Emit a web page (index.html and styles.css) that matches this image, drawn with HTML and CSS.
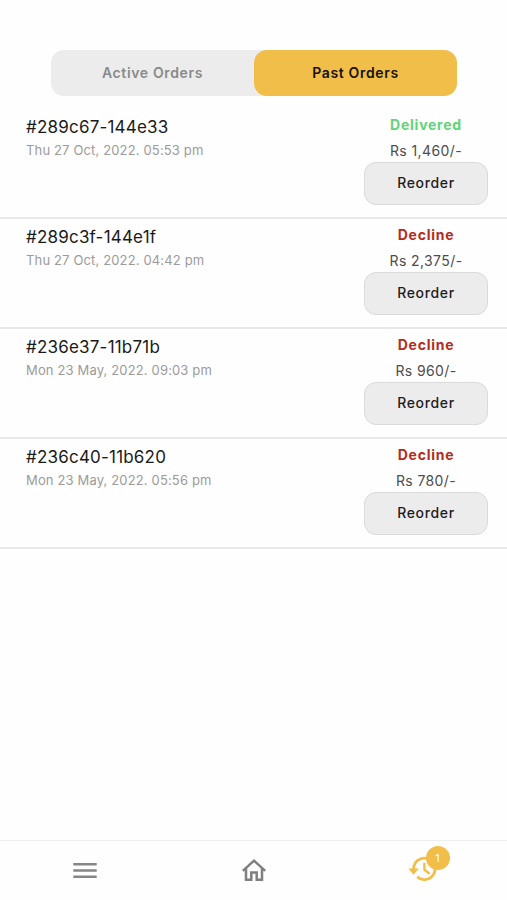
FILE: index.html
```html
<!DOCTYPE html>
<html lang="en">

<head>
    <meta charset="UTF-8">
    <meta name="viewport" content="width=device-width, initial-scale=1.0">
    <title>Past Orders</title>
    <link rel="stylesheet" href="styles.css">
</head>

<body>
    <div class="tabs">
        <button class="tab">Active Orders</button>
        <button class="tab active">Past Orders</button>
    </div>
    <main class="orders">
        <div class="order">
            <div class="order-info">
                <h3>#289c67-144e33</h3>
                <p>Thu 27 Oct, 2022. 05:53 pm</p>
            </div>
            <div class="order-side">
                <span class="status delivered">Delivered</span>
                <span class="price">Rs 1,460/-</span>
                <button class="reorder">Reorder</button>
            </div>
        </div>
        <div class="order">
            <div class="order-info">
                <h3>#289c3f-144e1f</h3>
                <p>Thu 27 Oct, 2022. 04:42 pm</p>
            </div>
            <div class="order-side">
                <span class="status decline">Decline</span>
                <span class="price">Rs 2,375/-</span>
                <button class="reorder">Reorder</button>
            </div>
        </div>
        <div class="order">
            <div class="order-info">
                <h3>#236e37-11b71b</h3>
                <p>Mon 23 May, 2022. 09:03 pm</p>
            </div>
            <div class="order-side">
                <span class="status decline">Decline</span>
                <span class="price">Rs 960/-</span>
                <button class="reorder">Reorder</button>
            </div>
        </div>
        <div class="order">
            <div class="order-info">
                <h3>#236c40-11b620</h3>
                <p>Mon 23 May, 2022. 05:56 pm</p>
            </div>
            <div class="order-side">
                <span class="status decline">Decline</span>
                <span class="price">Rs 780/-</span>
                <button class="reorder">Reorder</button>
            </div>
        </div>
    </main>
    <nav class="bottom-nav">
        <a href="#" class="nav-item" aria-label="Menu">
            <svg width="30" height="30" viewBox="0 0 30 30">
                <path d="M3.3 8.3h23.4M3.3 14.5h23.4M3.3 20.7h23.4" fill="none" stroke="#868686" stroke-width="2.4"/>
            </svg>
        </a>
        <a href="#" class="nav-item" aria-label="Home">
            <svg width="30" height="30" viewBox="0 0 30 30">
                <path d="M3.8 14.9L15 4.6l11.2 10.3M7 12.4v11.3h5.3v-7.3h5.4v7.3H23V12.4" fill="none" stroke="#808080" stroke-width="2.5"/>
            </svg>
        </a>
        <a href="#" class="nav-item" aria-label="Orders">
            <span class="history">
                <svg width="30" height="30" viewBox="0 0 30 30">
                    <path d="M5.6 12.9A10.7 10.7 0 1 1 9.2 20.9" fill="none" stroke="#f1be4a" stroke-width="2.8"/>
                    <path d="M0.4 12.4h10.4L5.6 18.8z" fill="#f1be4a"/>
                    <path d="M16.4 6.8v6.8l5.2 4.2" fill="none" stroke="#f1be4a" stroke-width="2.4"/>
                </svg>
                <span class="badge">1</span>
            </span>
        </a>
    </nav>
</body>

</html>
```

FILE: styles.css
```css
* {
    box-sizing: border-box;
}

body {
    font-family: Inter, "Open Sans", sans-serif;
    margin: 0;
    min-height: 100vh;
    display: flex;
    flex-direction: column;
    background-color: #fefefe;
    color: #1a1a1a;
}

button {
    font-family: inherit;
    border: none;
    padding: 0 0 2px;
    cursor: pointer;
}

.tabs {
    display: flex;
    height: 46px;
    margin: 50px 50px 0 51px;
    border-radius: 13px;
    background-color: #ececec;
}

.tab {
    flex: 1;
    border-radius: 13px;
    background-color: transparent;
    color: #8a8a8a;
    font-size: 14px;
    font-weight: 600;
    letter-spacing: 0.65px;
}

.tab.active {
    background-color: #f1be4a;
    color: #15120a;
}

.orders {
    flex: 1;
    padding-top: 13px;
}

.order {
    display: flex;
    justify-content: space-between;
    height: 110px;
    padding: 6px 19px 0 26px;
    border-bottom: 2px solid #e9e9e9;
}

.order-info h3 {
    margin: 0;
    font-size: 17px;
    font-weight: 400;
    line-height: 24px;
    letter-spacing: 0.2px;
}

.order-info p {
    margin: 0;
    color: #9b9b9b;
    font-size: 13px;
    line-height: 22px;
    letter-spacing: 0.15px;
}

.order-side {
    display: flex;
    flex-direction: column;
    align-items: center;
    width: 124px;
}

.status {
    font-size: 14px;
    font-weight: 700;
    line-height: 20px;
    letter-spacing: 0.75px;
}

.delivered {
    color: #60d476;
}

.decline {
    color: #b42b20;
}

.price {
    margin-top: 6px;
    color: #4d4d4d;
    font-size: 14px;
    line-height: 20px;
    letter-spacing: 0.4px;
}

.reorder {
    width: 124px;
    height: 43px;
    flex-shrink: 0;
    margin-top: 1px;
    border: 1px solid #dadada;
    border-radius: 12px;
    background-color: #ececec;
    color: #1d1d1d;
    font-size: 14px;
    font-weight: 500;
    letter-spacing: 0.65px;
}

.bottom-nav {
    display: flex;
    height: 60px;
    border-top: 1px solid #eeeeee;
}

.nav-item {
    flex: 1;
    display: flex;
    align-items: center;
    justify-content: center;
}

.nav-item svg {
    display: block;
}

.history {
    position: relative;
}

/* order count over the history icon */
.badge {
    position: absolute;
    top: -10px;
    left: 18px;
    width: 24px;
    height: 24px;
    border-radius: 50%;
    background-color: #f1be4a;
    color: #fff;
    font-size: 11px;
    line-height: 24px;
    text-align: center;
}
```
